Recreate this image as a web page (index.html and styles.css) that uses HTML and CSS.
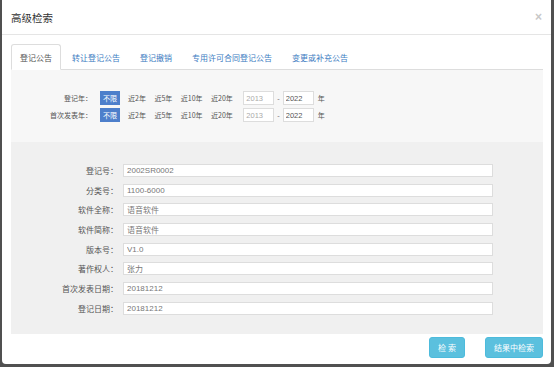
FILE: index.html
```html
<!DOCTYPE html>
<html>
<head>
  <link rel="stylesheet" href="styles.css">
</head>
<body>
  <div class="modal">
    <div class="modal-header">
      <h4 class="modal-title">高级检索</h4>
      <span class="close">×</span>
    </div>

    <div class="modal-body">
      <ul class="tabs">
        <li class="tab active">登记公告</li>
        <li class="tab">转让登记公告</li>
        <li class="tab">登记撤销</li>
        <li class="tab">专用许可合同登记公告</li>
        <li class="tab">变更或补充公告</li>
      </ul>

      <div class="filter">
        <div class="filter-row">
          <span class="filter-label">登记年：</span>
          <span class="btn-range">不限</span>
          <span class="range">近2年</span>
          <span class="range">近5年</span>
          <span class="range">近10年</span>
          <span class="range">近20年</span>
          <input class="year-input" value="2013">
          <span class="dash">-</span>
          <input class="year-input dark" value="2022">
          <span class="unit">年</span>
        </div>
        <div class="filter-row">
          <span class="filter-label">首次发表年：</span>
          <span class="btn-range">不限</span>
          <span class="range">近2年</span>
          <span class="range">近5年</span>
          <span class="range">近10年</span>
          <span class="range">近20年</span>
          <input class="year-input" value="2013">
          <span class="dash">-</span>
          <input class="year-input dark" value="2022">
          <span class="unit">年</span>
        </div>
      </div>

      <div class="form">
        <div class="form-row"><label>登记号：</label><input value="2002SR0002"></div>
        <div class="form-row"><label>分类号：</label><input value="1100-6000"></div>
        <div class="form-row"><label>软件全称：</label><input value="语音软件"></div>
        <div class="form-row"><label>软件简称：</label><input value="语音软件"></div>
        <div class="form-row"><label>版本号：</label><input value="V1.0"></div>
        <div class="form-row"><label>著作权人：</label><input value="张力"></div>
        <div class="form-row"><label>首次发表日期：</label><input value="20181212"></div>
        <div class="form-row"><label>登记日期：</label><input value="20181212"></div>
      </div>
    </div>

    <div class="modal-footer">
      <button class="btn">检 索</button>
      <button class="btn">结果中检索</button>
    </div>
  </div>
</body>
</html>
```

FILE: styles.css
```css
body {
  margin: 0;
  height: 367px;
  background-color: #505050;
  font-family: "Noto Sans CJK SC", "Liberation Sans", sans-serif;
  color: #555;
}
.modal {
  width: 549px;
  height: 364px;
  margin-left: 2px;
  background-color: #fff;
  border-radius: 0 0 4px 4px;
  display: flex;
  flex-direction: column;
}
.modal-header {
  height: 34px;
  border-bottom: 1px solid #e5e5e5;
  display: flex;
  align-items: center;
  justify-content: space-between;
  padding: 0 9px 0 9px;
}
.modal-title {
  margin: 0;
  font-size: 10.5px;
  font-weight: normal;
  color: #333;
}
.close {
  font-size: 12px;
  font-weight: bold;
  color: #c8c8c8;
  font-family: "Liberation Sans", sans-serif;
}
.modal-body {
  padding: 9px 8px 0 9px;
}
.tabs {
  list-style: none;
  margin: 0;
  padding: 0;
  display: flex;
  border-bottom: 1px solid #ddd;
}
.tab {
  height: 25px;
  line-height: 25px;
  padding: 0 8px;
  margin-right: 2px;
  margin-bottom: -1px;
  font-size: 8px;
  color: #3d7cc2;
  border: 1px solid transparent;
  border-radius: 3px 3px 0 0;
  box-sizing: border-box;
}
.tab.active {
  color: #555;
  background-color: #fff;
  border-color: #ddd #ddd transparent #ddd;
  height: 26px;
}
.filter {
  background-color: #f7f7f7;
  padding: 21px 0 20px 0;
  display: flex;
  flex-direction: column;
  gap: 3px;
}
.filter-row {
  display: flex;
  align-items: center;
  height: 14px;
  font-size: 7px;
}
.filter-label {
  width: 81px;
  text-align: right;
  margin-right: 8px;
}
.btn-range {
  width: 20px;
  height: 14px;
  line-height: 14px;
  text-align: center;
  background-color: #4d7fcb;
  color: #fff;
  margin-right: 8px;
}
.range {
  margin-right: 8.5px;
}
.year-input {
  width: 31px;
  height: 14px;
  box-sizing: border-box;
  border: 1px solid #ddd;
  background-color: #fff;
  font-family: "Liberation Sans", sans-serif;
  font-size: 7.5px;
  color: #aaa;
  padding: 0 2px;
  margin-left: 2px;
}
.year-input.dark {
  color: #555;
  margin-left: 0;
}
.dash {
  margin: 0 3px;
}
.unit {
  margin-left: 4px;
}
.form {
  background-color: #f0f0f0;
  padding: 22px 0 19px 0;
  display: flex;
  flex-direction: column;
  gap: 6.7px;
}
.form-row {
  display: flex;
  align-items: center;
  font-size: 8px;
}
.form-row label {
  width: 107px;
  text-align: right;
  margin-right: 5px;
}
.form-row input {
  width: 370px;
  height: 13px;
  box-sizing: border-box;
  border: 1px solid #ddd;
  background-color: #fff;
  padding: 0 3px;
  font-family: "Liberation Sans", "Noto Sans CJK SC", sans-serif;
  font-size: 8px;
  color: #777;
}
.modal-footer {
  display: flex;
  justify-content: flex-end;
  gap: 20px;
  padding: 3px 8px 0 0;
}
.btn {
  height: 21px;
  padding: 0 8px;
  min-width: 36px;
  border: 1px solid #4dbbdc;
  border-radius: 3px;
  background-color: #5bc0de;
  color: #fff;
  font-family: "Noto Sans CJK SC", sans-serif;
  font-size: 8px;
}
```
